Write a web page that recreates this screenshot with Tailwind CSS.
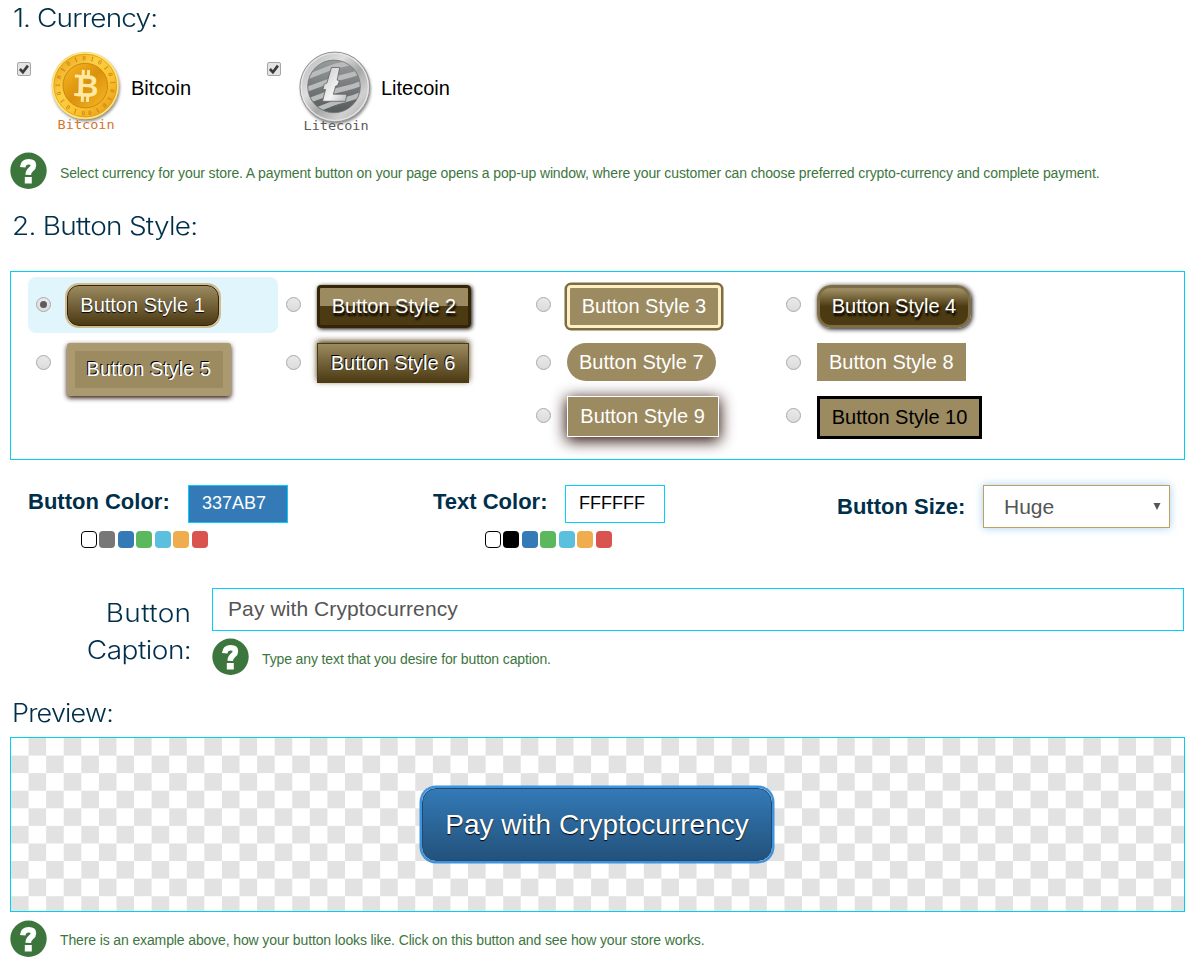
<!DOCTYPE html>
<html lang="en">
<head>
<meta charset="utf-8">
<title>Button settings</title>
<script src="https://cdn.jsdelivr.net/npm/@tailwindcss/browser@4"></script>
</head>
<body class="h-[972px] w-[1195px] overflow-hidden bg-white font-['Liberation_Sans',Arial,sans-serif] text-black">
<svg class="hidden">
  <symbol id="help" viewBox="0 0 37 37">
    <circle cx="18.5" cy="18.8" r="18.2" fill="#3c763d"/>
    <path d="M12.7 15.2C13.1 11.4 15.3 9.8 18.8 9.8C22 9.8 23.4 11.4 23.4 13.4C23.4 17.4 18.4 17 18.2 22.8" fill="none" stroke="#fff" stroke-width="5.6"/>
    <path d="M14.8 25h7v6.5h-7z" fill="#fff"/>
  </symbol>
</svg>

<h2 class="h-[50px] pl-[13px] pt-px font-['Inter',sans-serif] text-[25px] font-[350] leading-[34px] text-[#002f4b]"><span class="inline-block origin-left scale-x-112 tracking-[-0.8px]">1. Currency:</span></h2>

<div class="flex h-[102px] pl-[17px]">
  <label class="flex w-[250px] items-start">
    <svg class="mt-3 size-[14px]" viewBox="0 0 14 14"><rect x=".5" y=".5" width="13" height="13" rx="1.5" fill="#e4e4e4" stroke="#a6a6a6"/><path d="M2.9 7l3 3.2 5-6.6" fill="none" stroke="#3c3c3c" stroke-width="2.7"/></svg>
    <svg class="ml-[18px] h-[84px] w-[74px]" viewBox="49 50 74 84">
      <defs>
        <linearGradient id="gold" x1="0" y1="0" x2="1" y2="1"><stop offset="0" stop-color="#e79b13"/><stop offset=".4" stop-color="#fdd043"/><stop offset=".65" stop-color="#fbc02d"/><stop offset="1" stop-color="#e08d10"/></linearGradient>
        <linearGradient id="gold2" x1="0" y1="0" x2="1" y2="1"><stop offset="0" stop-color="#f8b922"/><stop offset=".5" stop-color="#dc910d"/><stop offset="1" stop-color="#f8ba25"/></linearGradient>
        <filter id="drop" x="-20%" y="-20%" width="140%" height="140%"><feDropShadow dx="1" dy="2" stdDeviation="1.4" flood-color="#555" flood-opacity=".7"/></filter>
        <path id="ring" d="M85.3 110.9a25.3 25.3 0 1 1 .1 0"/>
      </defs>
      <circle cx="85.3" cy="85.6" r="33.6" fill="url(#gold)" filter="url(#drop)"/>
      <circle cx="85.3" cy="85.6" r="32.6" fill="none" stroke="#ffe77a" stroke-width="1.6"/>
      <circle cx="85.3" cy="85.6" r="31.3" fill="none" stroke="#d99a22" stroke-width=".7"/>
      <text font-family="Liberation Serif, serif" font-size="7" font-weight="bold" fill="#bd7a0b" opacity=".75"><textPath href="#ring" textLength="156">010101010101010101010</textPath></text>
      <circle cx="85.3" cy="85.6" r="22.3" fill="url(#gold2)" stroke="#c58414" stroke-width=".9"/>
      <g transform="rotate(2 86 86)" fill="#ffe9a3" stroke="#ffe9a3"><text x="76.5" y="96.5" font-family="Liberation Sans, sans-serif" font-size="31" font-weight="bold" textLength="22" lengthAdjust="spacingAndGlyphs" stroke="none">B</text><path d="M82.8 70v6M88 70v6M82.8 96v6M88 96v6M74.5 76.5h5M74.5 95h5" stroke-width="3"/></g>
      <text x="57.6" y="129.3" font-family="DejaVu Sans Mono, monospace" font-size="11.5" textLength="57" lengthAdjust="spacingAndGlyphs" fill="#d2762f">Bitcoin</text>
    </svg>
    <span class="ml-2 text-[20px] leading-[76px]">Bitcoin</span>
  </label>
  <label class="flex w-[250px] items-start">
    <svg class="mt-3 size-[14px]" viewBox="0 0 14 14"><rect x=".5" y=".5" width="13" height="13" rx="1.5" fill="#e4e4e4" stroke="#a6a6a6"/><path d="M2.9 7l3 3.2 5-6.6" fill="none" stroke="#3c3c3c" stroke-width="2.7"/></svg>
    <svg class="ml-[17px] h-[84px] w-[75px]" viewBox="298 50 75 84">
      <defs>
        <linearGradient id="silver" x1="0" y1="0" x2="1" y2="1"><stop offset="0" stop-color="#b2b2b2"/><stop offset=".35" stop-color="#dedede"/><stop offset=".55" stop-color="#a7a7a7"/><stop offset=".75" stop-color="#d0d0d0"/><stop offset="1" stop-color="#a2a2a2"/></linearGradient>
        <linearGradient id="dark" x1="0" y1="0" x2="0" y2="1"><stop offset="0" stop-color="#999c9c"/><stop offset="1" stop-color="#565a5a"/></linearGradient>
        <linearGradient id="mark" x1="0" y1="0" x2="1" y2="1"><stop offset="0" stop-color="#c9c9c9"/><stop offset=".6" stop-color="#f4f4f4"/><stop offset="1" stop-color="#b9b9b9"/></linearGradient>
        <clipPath id="disc"><circle cx="334" cy="86.4" r="25.8"/></clipPath>
      </defs>
      <circle cx="334.8" cy="87" r="34.9" fill="url(#silver)" filter="url(#drop)"/>
      <circle cx="334.8" cy="87" r="34.9" fill="none" stroke="#929292"/>
      <circle cx="334.8" cy="87" r="33.5" fill="none" stroke="#e8e8e8" stroke-width="1.2"/>
      <circle cx="334" cy="86.4" r="26.3" fill="url(#dark)" stroke="#707373" stroke-width=".8"/>
      <g clip-path="url(#disc)" fill="none" stroke="#b9bcbd" stroke-width="5">
        <path d="M302 79l28-11c9-4 16-2 25-8M302 91l30-11c11-4 17-3 30-9M302 103l30-11c11-4 17-3 30-9M306 114l28-11c11-4 15-3 28-9"/>
      </g>
      <path d="M331.4 67.5h8.3l-2.6 12.6 2.4.5-2 5-1.8.4-2.4 8.2h13.6l-1.4 7.1h-23l3-11.8-2.6.3 1.3-5.6 2.7-1.2z" fill="url(#mark)" stroke="#5f6262" stroke-width=".8"/>
      <text x="303.6" y="129.5" font-family="DejaVu Sans Mono, monospace" font-size="11.5" textLength="65" lengthAdjust="spacingAndGlyphs" fill="#5a5a5a">Litecoin</text>
    </svg>
    <span class="ml-2 text-[20px] leading-[76px]">Litecoin</span>
  </label>
</div>

<div class="flex h-[56px] items-start pl-[10px] text-[#3c763d]">
  <svg class="size-[37px]"><use href="#help"/></svg>
  <p class="ml-[13px] text-[14px] leading-[42px] tracking-[-0.125px]">Select currency for your store. A payment button on your page opens a pop-up window, where your customer can choose preferred crypto-currency and complete payment.</p>
</div>

<h2 class="h-[63px] pl-3 pt-px font-['Inter',sans-serif] text-[25px] font-[350] leading-[34px] text-[#002f4b]"><span class="inline-block origin-left scale-x-112 tracking-[-0.67px]">2. Button Style:</span></h2>

<div class="mx-[10px] grid h-[189px] grid-cols-[repeat(4,250px)] grid-rows-[58px_53px_60px] border border-[#00cfee] pl-[17px] pt-[5px] text-[20px] leading-[38px] text-white">
  <label class="flex h-14 items-start rounded-lg bg-[#e1f6fc] pl-2">
    <span class="mt-5 flex size-[15px] items-center justify-center rounded-full border border-[#a9a9a9] bg-linear-to-b from-[#e9e9e9] to-[#dcdcdc]"><span class="size-[7px] rounded-full bg-[#5c5c5c]"></span></span>
    <span class="ml-4 mt-2 rounded-[12px] border border-[#352406] bg-linear-to-b from-[#9c8a60] to-[#4c3a12] pl-[12.3px] pr-[13.2px] shadow-[0_0_0_2px_#d0bc90] leading-[39px] [text-shadow:0_1px_1px_#000]">Button Style 1</span>
  </label>
  <label class="flex items-start pl-2">
    <span class="mt-5 size-[15px] rounded-full border border-[#a9a9a9] bg-linear-to-b from-[#e9e9e9] to-[#dcdcdc]"></span>
    <span class="ml-4 mt-2 rounded-[4px] border-3 border-[#352507] bg-[linear-gradient(#9c8a60_50%,#4c3a12_50%)] px-[11.7px] leading-[37px] shadow-[1px_1px_4px_#000] [text-shadow:1px_3px_2px_#000]">Button Style 2</span>
  </label>
  <label class="flex items-start pl-2">
    <span class="mt-5 size-[15px] rounded-full border border-[#a9a9a9] bg-linear-to-b from-[#e9e9e9] to-[#dcdcdc]"></span>
    <span class="ml-4 mt-2 rounded-[4px] border-3 border-[#ffefc4] bg-[#9c8a60] px-[11.7px] leading-[37px] shadow-[0_0_0_2.5px_#7e6c44]">Button Style 3</span>
  </label>
  <label class="flex items-start pl-2">
    <span class="mt-5 size-[15px] rounded-full border border-[#a9a9a9] bg-linear-to-b from-[#e9e9e9] to-[#dcdcdc]"></span>
    <span class="ml-4 mt-2 rounded-[14px] border-3 border-[#7e6c44] bg-[linear-gradient(#9c8a60_5%,#4c3a12_50%)] px-[11.7px] leading-[37px] shadow-[1px_1px_5px_#000] [text-shadow:1px_3px_2px_#000]">Button Style 4</span>
  </label>
  <label class="flex items-start pl-2">
    <span class="mt-5 size-[15px] rounded-full border border-[#a9a9a9] bg-linear-to-b from-[#e9e9e9] to-[#dcdcdc]"></span>
    <span class="ml-4 mt-2 rounded-[3px] border-8 border-[#ab9a6f] bg-[#9c8a60] px-[11.6px] leading-[37px] shadow-[0_2px_5px_#2b0f08] [text-shadow:-1px_-1px_0_#000]">Button Style 5</span>
  </label>
  <label class="flex items-start pl-2">
    <span class="mt-5 size-[15px] rounded-full border border-[#a9a9a9] bg-linear-to-b from-[#e9e9e9] to-[#dcdcdc]"></span>
    <span class="ml-4 mt-2 border border-[#4c3a12] bg-linear-to-b from-[#9c8a60] to-[#4c3a12] px-[12.75px] shadow-[0_-2px_6px_#4c3a12] [text-shadow:-1px_-1px_0_#000]">Button Style 6</span>
  </label>
  <label class="flex items-start pl-2">
    <span class="mt-5 size-[15px] rounded-full border border-[#a9a9a9] bg-linear-to-b from-[#e9e9e9] to-[#dcdcdc]"></span>
    <span class="ml-4 mt-2 rounded-full bg-[#9c8a60] px-3">Button Style 7</span>
  </label>
  <label class="flex items-start pl-2">
    <span class="mt-5 size-[15px] rounded-full border border-[#a9a9a9] bg-linear-to-b from-[#e9e9e9] to-[#dcdcdc]"></span>
    <span class="ml-4 mt-2 bg-[#9c8a60] px-3">Button Style 8</span>
  </label>
  <label class="col-start-3 flex items-start pl-2">
    <span class="mt-5 size-[15px] rounded-full border border-[#a9a9a9] bg-linear-to-b from-[#e9e9e9] to-[#dcdcdc]"></span>
    <span class="ml-4 mt-2 border border-white bg-[#9c8a60] pl-[12.3px] pr-[13.2px] leading-[38.5px] shadow-[0_3px_15px_1px_#2b0f08]">Button Style 9</span>
  </label>
  <label class="flex items-start pl-2">
    <span class="mt-5 size-[15px] rounded-full border border-[#a9a9a9] bg-linear-to-b from-[#e9e9e9] to-[#dcdcdc]"></span>
    <span class="ml-4 mt-2 border-3 border-black bg-[#9c8a60] px-[11.7px] leading-[37px] text-black">Button Style 10</span>
  </label>
</div>

<div class="flex h-[128px] items-start pt-[25px] text-[22px] font-bold text-[#002f4b]">
  <div class="w-[405px] pl-[28px]">
    <div class="flex"><span class="w-[160px] whitespace-nowrap leading-[33px]">Button Color:</span><div class="h-[38px] w-[100px] border border-[#00cfff] bg-[#337ab7] pl-[13px] text-[18px] font-normal leading-[35px] text-white">337AB7</div></div>
    <div class="ml-[53px] mt-2 flex gap-[2.45px]">
      <i class="h-[17px] w-4 rounded-[4px] border border-black bg-white"></i><i class="h-[17px] w-4 rounded-[4px] bg-[#777]"></i><i class="h-[17px] w-4 rounded-[4px] bg-[#337ab7]"></i><i class="h-[17px] w-4 rounded-[4px] bg-[#5cb85c]"></i><i class="h-[17px] w-4 rounded-[4px] bg-[#5bc0de]"></i><i class="h-[17px] w-4 rounded-[4px] bg-[#f0ad4e]"></i><i class="h-[17px] w-4 rounded-[4px] bg-[#d9534f]"></i>
    </div>
  </div>
  <div class="w-[404px] pl-[28px]">
    <div class="flex"><span class="w-[132px] whitespace-nowrap leading-[33px]">Text Color:</span><div class="h-[38px] w-[100px] border border-[#00cfff] bg-white pl-[13px] text-[18px] font-normal leading-[35px] text-black">FFFFFF</div></div>
    <div class="ml-[52px] mt-2 flex gap-[2.45px]">
      <i class="h-[17px] w-4 rounded-[4px] border border-black bg-white"></i><i class="h-[17px] w-4 rounded-[4px] bg-black"></i><i class="h-[17px] w-4 rounded-[4px] bg-[#337ab7]"></i><i class="h-[17px] w-4 rounded-[4px] bg-[#5cb85c]"></i><i class="h-[17px] w-4 rounded-[4px] bg-[#5bc0de]"></i><i class="h-[17px] w-4 rounded-[4px] bg-[#f0ad4e]"></i><i class="h-[17px] w-4 rounded-[4px] bg-[#d9534f]"></i>
    </div>
  </div>
  <div class="flex pl-[28px]"><span class="w-[146px] whitespace-nowrap leading-[43px]">Button Size:</span>
    <div class="flex h-[43px] w-[187px] items-center justify-between border border-[#bda15c] bg-white pl-5 pr-[8px] text-[21px] font-normal text-[#555] shadow-[0_0_8px_#66afe999]"><span>Huge</span><svg class="mb-px h-[7px] w-[8px]" viewBox="0 0 8 7"><path d="M.5 0h7L4 7z" fill="#555"/></svg></div>
  </div>
</div>

<div class="flex h-[108px] items-start">
  <div class="w-[191px] pt-[7px] text-right font-['Inter',sans-serif] text-[25px] font-[350] leading-[37px] text-[#002f4b]"><span class="inline-block origin-right scale-x-112 tracking-[0.3px]">Button</span><br><span class="inline-block origin-right scale-x-112 tracking-[-0.45px]">Caption:</span></div>
  <div class="ml-[21px]">
    <div class="h-[43px] w-[972px] border border-[#00cfff] pl-[15px] text-[21px] leading-[40px] tracking-[0.1px] text-[#555]">Pay with Cryptocurrency</div>
    <div class="flex pt-[7px] text-[#3c763d]">
      <svg class="size-[37px]"><use href="#help"/></svg>
      <p class="ml-[13px] text-[14px] leading-[42px] tracking-[-0.125px]">Type any text that you desire for button caption.</p>
    </div>
  </div>
</div>

<h2 class="h-[41px] pl-3 pt-px font-['Inter',sans-serif] text-[25px] font-[350] leading-[32px] text-[#002f4b]"><span class="inline-block origin-left scale-x-108 tracking-[-0.75px]">Preview:</span></h2>

<div class="mx-[10px] flex h-[175px] items-center justify-center border border-[#00cfee] bg-[conic-gradient(#e2e2e2_25%,#fff_0_50%,#e2e2e2_0_75%,#fff_0)] bg-[length:35.17px_35.17px]">
  <div class="mr-px h-[73px] w-[350px] rounded-[14px] border border-[#1d4a72] bg-linear-to-b from-[#337ab7] to-[#23527c] text-center text-[28px] leading-[72px] text-white shadow-[0_0_0_2.5px_#3f93dc] [text-shadow:0_1px_1px_#000]">Pay with Cryptocurrency</div>
</div>

<div class="flex items-start pl-[10px] pt-2 text-[#3c763d]">
  <svg class="size-[37px]"><use href="#help"/></svg>
  <p class="ml-[13px] text-[14px] leading-[40px] tracking-[-0.125px]">There is an example above, how your button looks like. Click on this button and see how your store works.</p>
</div>
</body>
</html>
